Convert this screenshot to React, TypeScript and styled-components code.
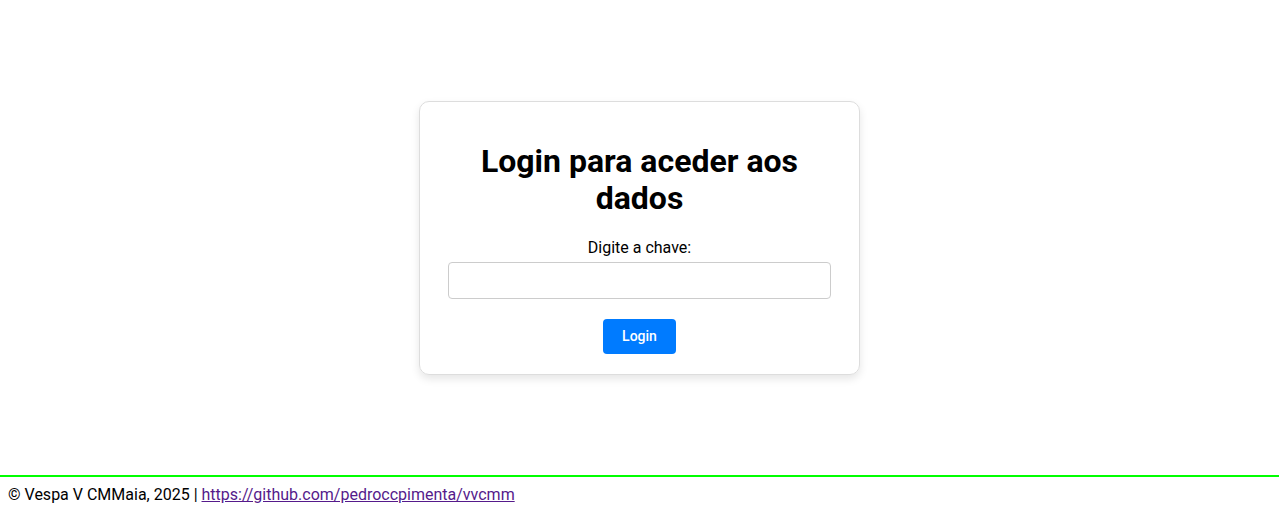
import styled, {createGlobalStyle} from "styled-components";

const GlobalStyle = createGlobalStyle`
  body {
    margin: 0;
    font-family: Roboto, "Liberation Sans", sans-serif;
    background: #fff;
    color: #000;
  }
`

const Page = styled.div`
  display: flex;
  flex-direction: column;
  min-height: 100vh;
`

const Main = styled.main`
  flex: 1;
  display: flex;
  align-items: center;
  justify-content: center;
`

const Card = styled.div`
  width: 441px;
  box-sizing: border-box;
  padding: 41px 28px 20px;
  border: 1px solid #ddd;
  border-radius: 10px;
  box-shadow: 0 4px 8px rgba(0, 0, 0, 0.1);
  text-align: center;
`

const Title = styled.h1`
  margin: 0 0 20px;
  font-size: 32px;
  font-weight: 700;
  line-height: 37.5px;
`

const Label = styled.label`
  display: block;
  font-size: 16px;
  line-height: 19px;
  margin-bottom: 5px;
`

const Input = styled.input`
  display: block;
  width: 100%;
  height: 37px;
  box-sizing: border-box;
  border: 1px solid #ccc;
  border-radius: 4px;
  font-size: 16px;
  padding: 0 10px;
`

const Button = styled.button`
  margin-top: 20px;
  padding: 8px 19px;
  font-family: Roboto, "Liberation Sans", sans-serif;
  font-size: 14px;
  font-weight: 500;
  line-height: 19px;
  color: #fff;
  background: #007bff;
  border: none;
  border-radius: 4px;
  cursor: pointer;
`

const Footer = styled.footer`
  border-top: 2px solid #00ff00;
  padding: 8px;
  font-size: 16px;
  line-height: 19px;
  height: 37px;
  box-sizing: border-box;
`

const Link = styled.a`
  color: #551a8b;
`

const App = () => {
  return (
    <Page>
      <GlobalStyle/>
      <Main>
        <Card>
          <Title>Login para aceder aos dados</Title>
          <Label htmlFor="chave">Digite a chave:</Label>
          <Input id="chave" type="password"/>
          <Button>Login</Button>
        </Card>
      </Main>
      <Footer>
        © Vespa V CMMaia, 2025 | <Link href="https://github.com/pedroccpimenta/vvcmm">https://github.com/pedroccpimenta/vvcmm</Link>
      </Footer>
    </Page>
  )
}

export default App;
